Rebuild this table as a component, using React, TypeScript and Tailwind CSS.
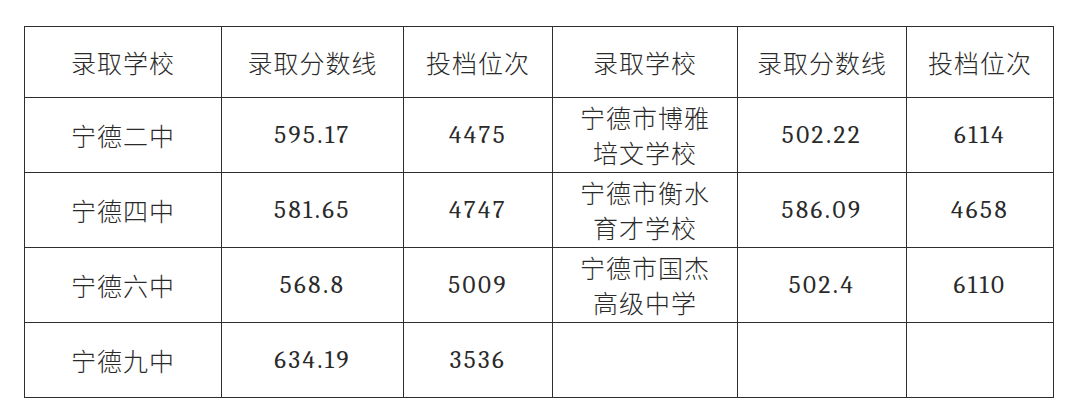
const header = ["录取学校", "录取分数线", "投档位次", "录取学校", "录取分数线", "投档位次"];

const rows: string[][] = [
  ["宁德二中", "595.17", "4475", "宁德市博雅\n培文学校", "502.22", "6114"],
  ["宁德四中", "581.65", "4747", "宁德市衡水\n育才学校", "586.09", "4658"],
  ["宁德六中", "568.8", "5009", "宁德市国杰\n高级中学", "502.4", "6110"],
  ["宁德九中", "634.19", "3536", "", "", ""],
];

const widths = ["w-[197px]", "w-[182px]", "w-[149px]", "w-[185px]", "w-[169px]", "w-[147px]"];

function Cell({ text }: { text: string }) {
  const isNum = /^[0-9.]+$/.test(text);
  if (isNum) {
    return (
      <td className="border-[1.5px] border-[#2e2e2e] text-center align-middle p-0">
        <span className="font-serif text-[25px] tracking-[2.5px]">{text}</span>
      </td>
    );
  }
  return (
    <td className="border-[1.5px] border-[#2e2e2e] text-center align-middle p-0 text-[25px] leading-[35px] tracking-[1px] font-light">
      {text.split("\n").map((line, i) => (
        <div key={i}>{line}</div>
      ))}
    </td>
  );
}

export default function App() {
  return (
    <div className="w-[1080px] h-[420px] bg-white pt-[26px] pl-[24px] font-[Noto_Sans_CJK_SC,sans-serif]">
      <table className="table-fixed border-collapse text-[#2a2a2a] w-[1029px]">
        <colgroup>
          {widths.map((w, i) => (
            <col key={i} className={w} />
          ))}
        </colgroup>
        <tbody>
          <tr className="h-[71px]">
            {header.map((h, i) => (
              <Cell key={i} text={h} />
            ))}
          </tr>
          {rows.map((r, i) => (
            <tr key={i} className="h-[75px]">
              {r.map((c, j) => (
                <Cell key={j} text={c} />
              ))}
            </tr>
          ))}
        </tbody>
      </table>
    </div>
  );
}
